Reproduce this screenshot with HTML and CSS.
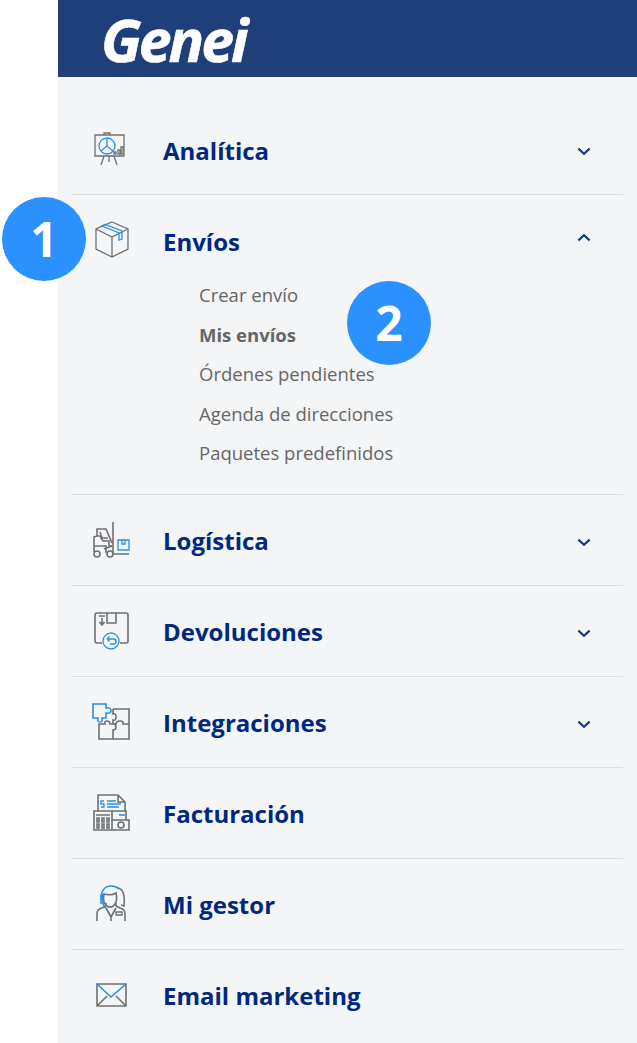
FILE: index.html
```html
<!DOCTYPE html>
<html lang="es">
<head>
  <meta charset="UTF-8">
  <meta name="viewport" content="width=device-width, initial-scale=1.0">
  <title>Genei</title>
  <link rel="stylesheet" href="styles.css">
</head>
<body>
  <aside class="sidebar">
    <header class="brand"><span class="logo">Genei</span></header>

    <nav class="menu">
      <div class="menu-group">
        <div class="menu-row">
          <svg class="icon" viewBox="0 0 40 40">
            <path class="gr" d="M3 5h29v21H3zM12 5V3h6v2M12 26l-3 9M22 26l3 9M17 26v6"/>
            <circle class="bl" cx="15" cy="16" r="8"/>
            <path class="bl" d="M15 8v8l6 5M15 16l-6 5"/>
            <path class="gr" d="M22 24v-2h2v2zM26 24v-4h2v4zM29 24v-7h2v7z"/>
          </svg>
          <span class="label">Analítica</span>
          <svg class="chevron" viewBox="0 0 12 8"><path d="M1 1.500l5 4.500 5-4.500"/></svg>
        </div>
      </div>

      <div class="menu-group">
        <div class="menu-row">
          <svg class="icon" viewBox="0 0 40 40">
            <path class="gr" d="M20 1l16 7v20l-16 8-16-8V8zM4 8l16 8 16-8M20 16v20"/>
            <path class="bl" d="M10 5l17 7v7l3-1v-8L13 3.500z"/>
          </svg>
          <span class="label">Envíos</span>
          <svg class="chevron up" viewBox="0 0 12 8"><path d="M1 6.500l5-4.500 5 4.500"/></svg>
        </div>
        <ul class="submenu">
          <li>Crear envío</li>
          <li class="current">Mis envíos</li>
          <li>Órdenes pendientes</li>
          <li>Agenda de direcciones</li>
          <li>Paquetes predefinidos</li>
        </ul>
      </div>

      <div class="menu-group">
        <div class="menu-row">
          <svg class="icon" viewBox="0 0 40 40">
            <path class="gr thick" d="M21 1v32h16M2 31V16l3-1V8h9l6 14M5 15h3l3 5h6v5h3M2 25h12v7"/>
            <path class="gr thick" d="M8 11l2 6 6 0M12 28l8-3"/>
            <circle class="gr thick" cx="5" cy="33" r="3"/>
            <circle class="gr thick" cx="18" cy="33" r="3"/>
            <path class="bl" d="M26 19h11v10H26zM30 19v4h3v-4"/>
          </svg>
          <span class="label">Logística</span>
          <svg class="chevron" viewBox="0 0 12 8"><path d="M1 1.500l5 4.500 5-4.500"/></svg>
        </div>
      </div>

      <div class="menu-group">
        <div class="menu-row">
          <svg class="icon" viewBox="0 0 40 40">
            <path class="gr thick" d="M10 31H5q-2 0-2-2V3q0-2 2-2h29q2 0 2 2v26q0 2-2 2h-6M15 1v10h9V1M7 4h6M10 6v7M7.500 10l2.500 3 2.500-3"/>
            <circle class="bl" cx="19" cy="29" r="8"/>
            <path class="bl" d="M15 27h6q3 0 3 2.500T21 32h-3M15 27l2.500-2.500M15 27l2.500 2.500"/>
          </svg>
          <span class="label">Devoluciones</span>
          <svg class="chevron" viewBox="0 0 12 8"><path d="M1 1.500l5 4.500 5-4.500"/></svg>
        </div>
      </div>

      <div class="menu-group">
        <div class="menu-row">
          <svg class="icon" viewBox="0 0 40 40">
            <path class="bl thick" d="M1 1h13v4q5-1 5 2.500T14 10v5h-4q1 4-2 4t-2-4H1z"/>
            <path class="gr thick" d="M21 6h16v30H7V21h6q-1-3 2-3t3 3h3q3 0 3 3t-3 3v9M21 6v5q3-1 3 3t-3 3v4M21 21h3q0-3 4-3t3 3h6"/>
          </svg>
          <span class="label">Integraciones</span>
          <svg class="chevron" viewBox="0 0 12 8"><path d="M1 1.500l5 4.500 5-4.500"/></svg>
        </div>
      </div>

      <div class="menu-group">
        <div class="menu-row">
          <svg class="icon" viewBox="0 0 40 40">
            <path class="gr thick" d="M6 17V1h20l7 7v9M26 1v7h7"/>
            <path class="bl" d="M15 7h9M15 10h14M15 13h12M12 7H9v3h3v3H9"/>
            <path class="gr thick" d="M2 17h18v19H2zM20 17h14v9H20zM20 26h17v10H20z"/>
            <path class="gr thick" d="M4 21h14M5 24h2v4H5zM5 30h2v4H5zM10 24h2v4h-2zM10 30h2v4h-2zM15 24h2v4h-2zM15 30h2v4h-2z"/>
            <circle class="gr thick" cx="29" cy="31" r="3"/>
            <path class="bl thick" d="M27 21h6"/>
          </svg>
          <span class="label">Facturación</span>
        </div>
      </div>

      <div class="menu-group">
        <div class="menu-row">
          <svg class="icon" viewBox="0 0 40 40">
            <path class="gr thick" d="M5 36v-7q0-5 5-6l4-2v-3M24 18v3l4 2q5 1 5 6v7M14 23l5 9 5-9M19 32v4M12 9c-1 5 0 10 3 12 3 2 6 1 8-2 2-3 2-7 1-11-3 2-8 2-12 1zM26 3c5 1 7 8 6 18l-3-1"/>
            <path class="bl thick" d="M10 15C8 6 13 1 19 1c4 0 6 1 8 3M9 10h2v8H9zM11 18q1 4 3 5"/>
            <path class="gr" d="M24 27h6v3h-6z"/>
          </svg>
          <span class="label">Mi gestor</span>
        </div>
      </div>

      <div class="menu-group">
        <div class="menu-row">
          <svg class="icon" viewBox="0 0 40 40">
            <path class="gr thick" d="M5 8h29v22H5zM5 30l10-10M34 30L24 20"/>
            <path class="bl thick" d="M5 8l14 13L34 8"/>
          </svg>
          <span class="label">Email marketing</span>
        </div>
      </div>
    </nav>
  </aside>

  <!-- Numeros de ayuda sobre el menu -->
  <span class="badge badge-one">1</span>
  <span class="badge badge-two">2</span>
</body>
</html>
```

FILE: styles.css
```css
* {
  box-sizing: border-box;
}

body {
  margin: 0;
  height: 1043px;
  overflow: hidden;
  position: relative;
  background: #fff;
  font-family: 'Open Sans', sans-serif;
}

.sidebar {
  margin-left: 58px;
  height: 1043px;
  background: #f4f5f7;
}

.brand {
  display: flex;
  align-items: center;
  height: 77px;
  padding-left: 43px;
  background: #1f3f7a;
}

.logo {
  color: #fff;
  font-size: 59px;
  line-height: 70px;
  font-weight: 700;
  font-style: italic;
  letter-spacing: -3px;
  -webkit-text-stroke: 0.600px #fff;
}

.menu {
  padding: 27px 14px 0;
}

.menu-group {
  border-bottom: 1px solid #dcdde0;
}

.menu-group:last-child {
  border-bottom: 0;
}

.menu-row {
  display: flex;
  align-items: center;
  height: 90px;
  padding: 2px 32px 0 20px;
}

.icon {
  width: 40px;
  height: 40px;
  flex: none;
  fill: none;
  stroke-width: 1.300;
}

.icon .gr {
  stroke: #6f7073;
}

.icon .bl {
  stroke: #2a8fe8;
}

.icon .thick {
  stroke-width: 1.600;
}

.label {
  flex: 1;
  margin-left: 31px;
  color: #00287f;
  font-size: 24px;
  font-weight: 700;
}

.chevron {
  width: 14px;
  height: 9px;
  flex: none;
  margin-top: 3px;
  fill: none;
  stroke: #1a3c84;
  stroke-width: 2;
}

.chevron.up {
  margin-top: -8px;
}

.submenu {
  list-style: none;
  margin: -10px 0 0;
  padding: 0 0 21px 127px;
  color: #666;
  font-size: 18.500px;
}

.submenu li {
  height: 39.500px;
  line-height: 39.500px;
}

.submenu .current {
  font-weight: 700;
}

.badge {
  position: absolute;
  width: 84px;
  height: 84px;
  border-radius: 50%;
  background: #2a91fe;
  color: #fff;
  font-size: 48px;
  font-weight: 700;
  line-height: 84px;
  text-align: center;
}

.badge-one {
  left: 2px;
  top: 197px;
}

.badge-two {
  left: 347px;
  top: 281px;
}
```
